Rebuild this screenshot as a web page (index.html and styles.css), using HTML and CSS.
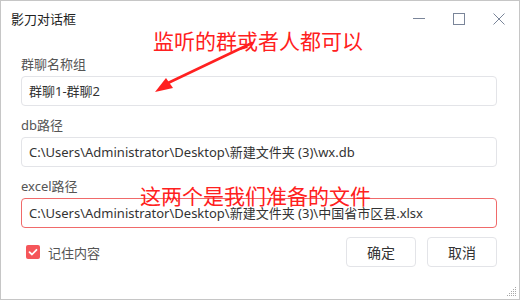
FILE: index.html
```html
<!DOCTYPE html>
<html lang="zh-CN">
<head>
<meta charset="utf-8">
<link rel="stylesheet" href="styles.css">
</head>
<body>
<div class="window">
  <div class="titlebar">
    <span class="title">影刀对话框</span>
    <div class="controls">
      <svg class="ctl" width="12" height="12" viewBox="0 0 12 12"><line x1="0" y1="5.5" x2="12" y2="5.5" stroke="#7a8599" stroke-width="1"/></svg>
      <svg class="ctl" width="12" height="12" viewBox="0 0 12 12"><rect x="0.5" y="0.5" width="11" height="11" fill="none" stroke="#7a8599" stroke-width="1"/></svg>
      <svg class="ctl" width="12" height="12" viewBox="0 0 12 12"><path d="M0.5 0.5 L11.5 11.5 M11.5 0.5 L0.5 11.5" stroke="#7a8599" stroke-width="1"/></svg>
    </div>
  </div>
  <div class="content">
    <div class="field">
      <div class="label">群聊名称组</div>
      <div class="input">群聊1-群聊2</div>
    </div>
    <div class="field">
      <div class="label">db路径</div>
      <div class="input">C:\Users\Administrator\Desktop\新建文件夹 (3)\wx.db</div>
    </div>
    <div class="field">
      <div class="label">excel路径</div>
      <div class="input error">C:\Users\Administrator\Desktop\新建文件夹 (3)\中国省市区县.xlsx</div>
    </div>
    <div class="footer">
      <label class="check">
        <span class="box"><svg width="14" height="14" viewBox="0 0 14 14"><path d="M3.5 7.2 L6 9.5 L10.5 4.8" fill="none" stroke="#fff" stroke-width="1.8" stroke-linecap="round" stroke-linejoin="round"/></svg></span>
        <span>记住内容</span>
      </label>
      <div class="buttons">
        <button class="btn">确定</button>
        <button class="btn">取消</button>
      </div>
    </div>
  </div>
  <svg class="grip" width="10" height="10" viewBox="0 0 10 10">
    <g fill="#a8a8a8">
      <rect x="8" y="0" width="1" height="1"/>
      <rect x="6" y="2" width="1" height="1"/><rect x="8" y="2" width="1" height="1"/>
      <rect x="4" y="4" width="1" height="1"/><rect x="6" y="4" width="1" height="1"/><rect x="8" y="4" width="1" height="1"/>
      <rect x="2" y="6" width="1" height="1"/><rect x="4" y="6" width="1" height="1"/><rect x="6" y="6" width="1" height="1"/><rect x="8" y="6" width="1" height="1"/>
      <rect x="0" y="8" width="1" height="1"/><rect x="2" y="8" width="1" height="1"/><rect x="4" y="8" width="1" height="1"/><rect x="6" y="8" width="1" height="1"/><rect x="8" y="8" width="1" height="1"/>
    </g>
  </svg>
  <div class="note note1">监听的群或者人都可以</div>
  <svg class="arrow" width="520" height="300" viewBox="0 0 520 300">
    <path d="M252 43 L168 83" stroke="#ff2020" stroke-width="2.5" stroke-linecap="round"/>
    <polygon points="155,92 166,78 173,88" fill="#ff2020"/>
  </svg>
  <div class="note note2">这两个是我们准备的文件</div>
</div>
</body>
</html>
```
FILE: styles.css
```css
* { box-sizing: border-box; }
html, body { margin: 0; padding: 0; background: #fff; }
body { font-family: "Noto Sans", "Noto Sans CJK SC", sans-serif; color: #333; }
.window {
  position: relative;
  width: 520px;
  height: 300px;
  border: 1px solid #c6c6c6;
  background: #fff;
  overflow: hidden;
}
.titlebar {
  height: 36px;
  display: flex;
  align-items: center;
  justify-content: space-between;
  padding: 0 14px 0 10px;
}
.title { font-size: 13px; color: #222; line-height: 1; }
.controls { display: flex; gap: 28px; align-items: center; }
.ctl { display: block; }
.content { padding: 17px 22px 0 20px; }
.field { display: flex; flex-direction: column; gap: 2px; margin-bottom: 9px; }
.label { height: 20px; line-height: 20px; font-size: 13px; color: #555; }
.input {
  height: 30px;
  line-height: 28px;
  border: 1px solid #e3e4e8;
  border-radius: 4px;
  padding: 0 7px;
  font-size: 13px;
  color: #333;
  white-space: nowrap;
  overflow: hidden;
}
.input.error { border-color: #f06a6a; }
.footer {
  display: flex;
  justify-content: space-between;
  align-items: center;
  margin-top: 7px;
  padding-left: 5px;
}
.check { display: flex; align-items: center; gap: 8px; font-size: 13px; color: #555; }
.box {
  width: 14px; height: 14px; border-radius: 2px; background: #f5565a;
  display: flex; align-items: center; justify-content: center;
}
.box svg { display: block; }
.buttons { display: flex; gap: 11px; }
.btn {
  width: 70px; height: 30px;
  border: 1px solid #e3e4e8; border-radius: 4px;
  background: #fff; color: #333;
  font-family: "Noto Sans", "Noto Sans CJK SC", sans-serif; font-size: 14px;
  padding: 0;
}
.grip { position: absolute; right: 2px; bottom: 2px; }
.note {
  position: absolute;
  font-family: "Noto Sans CJK SC", sans-serif;
  font-size: 21px;
  line-height: 1;
  color: #ff2020;
  white-space: nowrap;
}
.note1 { left: 152px; top: 29px; }
.note2 { left: 139px; top: 184px; }
.arrow { position: absolute; left: -1px; top: -1px; pointer-events: none; }
```
